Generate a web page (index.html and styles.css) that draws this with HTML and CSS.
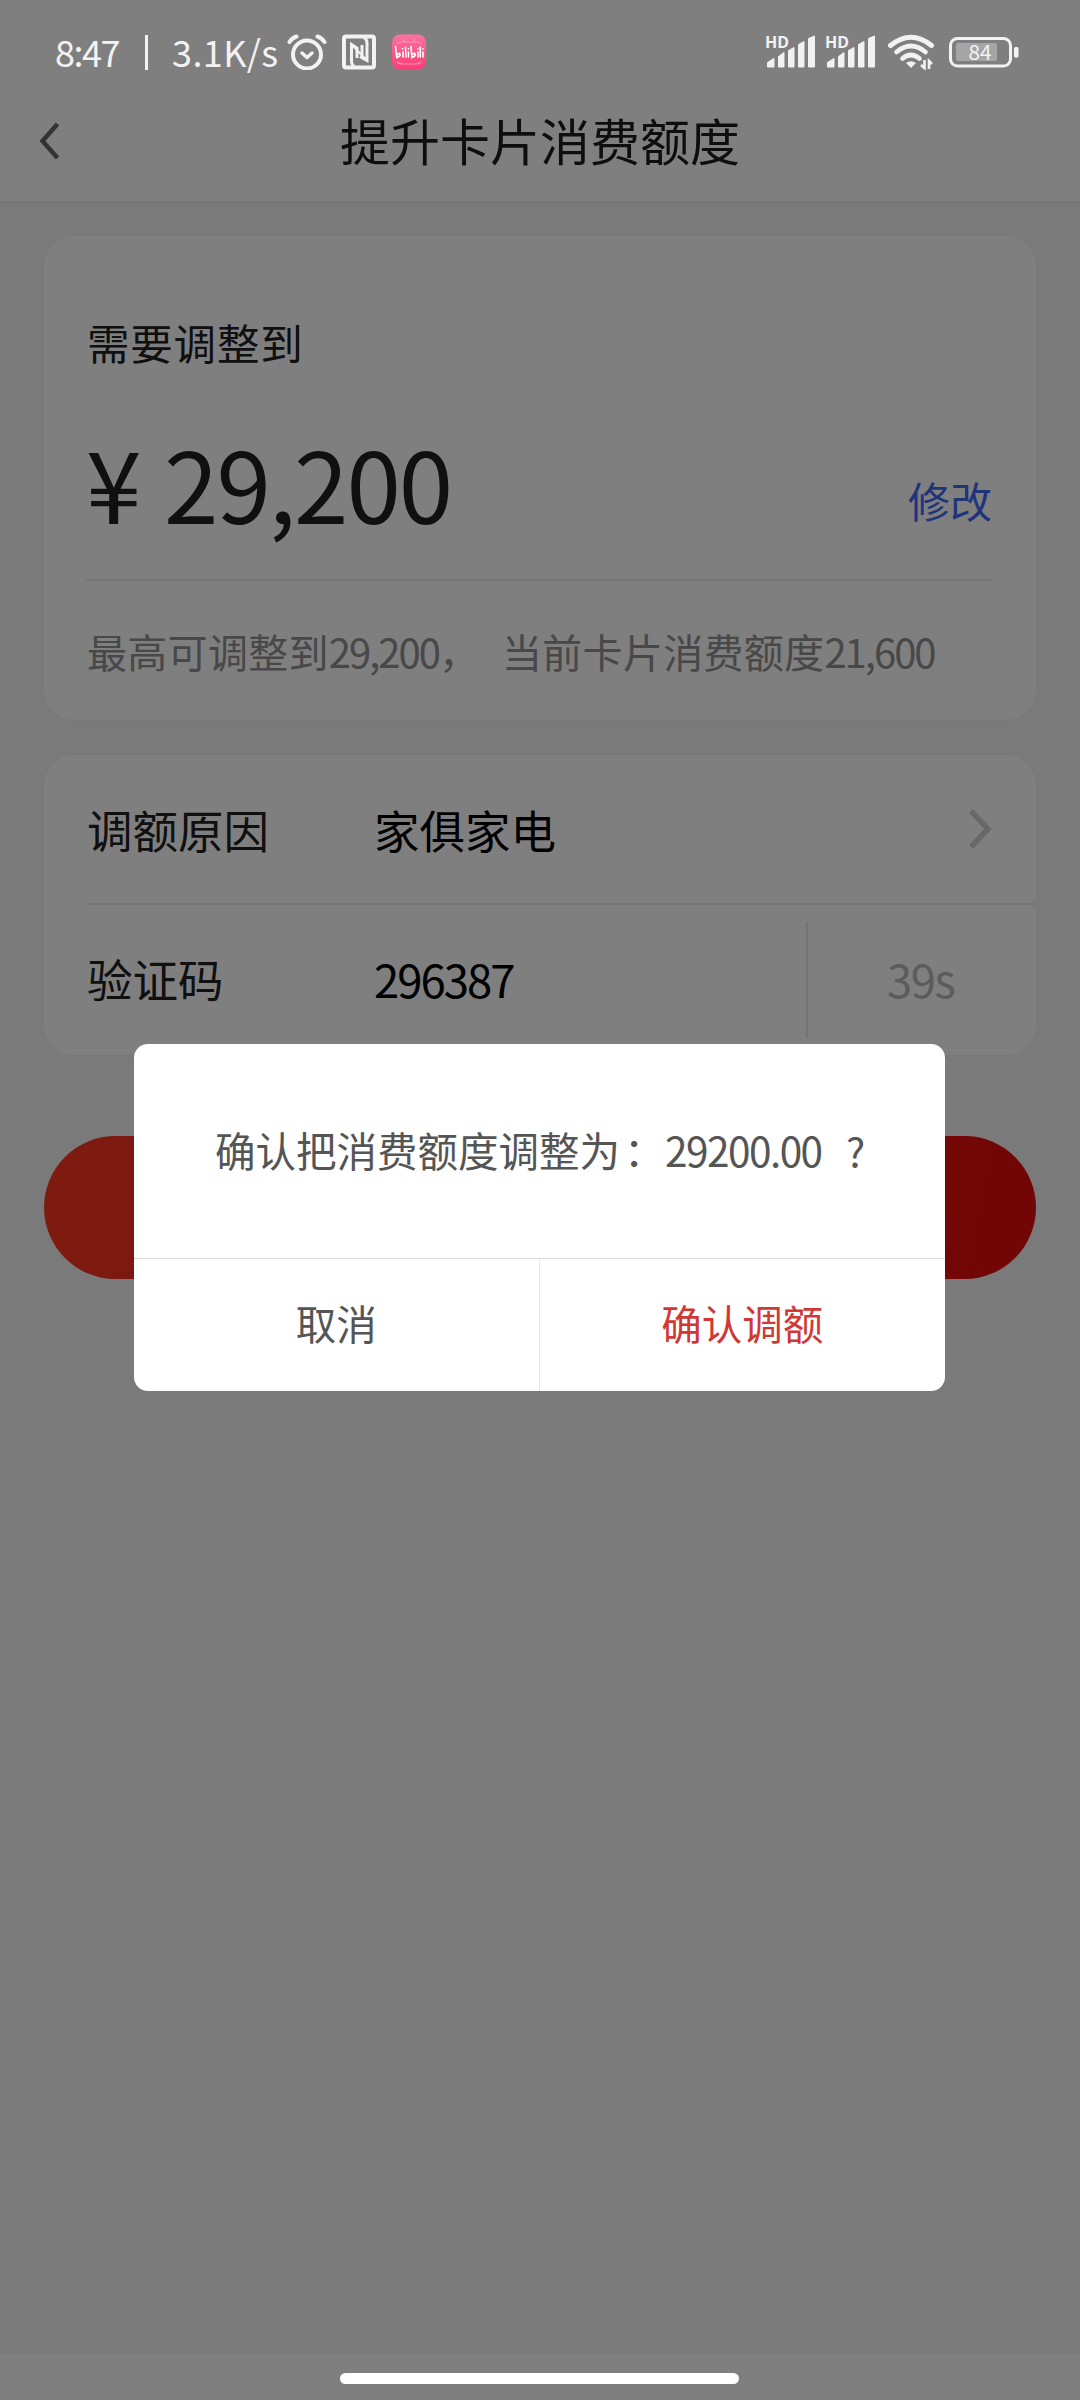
FILE: index.html
```html
<!DOCTYPE html>
<html lang="zh-CN">
<head>
<meta charset="utf-8">
<title>提升卡片消费额度</title>
<link rel="stylesheet" href="styles.css">
</head>
<body>
<div class="screen">
  <header class="header">
    <svg class="back" viewBox="0 0 22 40" width="22" height="40"><path d="M18.500 3L3.500 20L18.500 37" fill="none" stroke="#666" stroke-width="4.500"/></svg>
    <h1 class="title">提升卡片消费额度</h1>
  </header>
  <main class="content">
    <section class="card amount-card">
      <div class="label">需要调整到</div>
      <div class="amount-row">
        <div class="amount"><span class="yen">¥</span><span class="figure">29,200</span></div>
        <a class="edit">修改</a>
      </div>
      <div class="hint"><span>最高可调整到<span class="num">29,200</span>，</span><span>当前卡片消费额度<span class="num">21,600</span></span></div>
    </section>
    <section class="card form-card">
      <div class="row">
        <span class="name">调额原因</span>
        <span class="value">家俱家电</span>
        <svg class="chevron" viewBox="0 0 24 42" width="24" height="42"><path d="M3 3L20 21L3 39" fill="none" stroke="#d0d0d0" stroke-width="5.500"/></svg>
      </div>
      <div class="row row-code">
        <span class="name">验证码</span>
        <span class="value digits">296387</span>
        <span class="timer">39s</span>
      </div>
    </section>
    <div class="submit"></div>
  </main>
  <footer class="nav"></footer>
</div>
<div class="mask">
  <div class="status">
    <span class="clock">8:47</span>
    <span class="bar"></span>
    <span class="speed">3.1K/s</span>
    <svg class="alarm" viewBox="0 0 40 36" width="40" height="36" fill="none" stroke="#f2f2f2" stroke-linecap="round">
      <circle cx="20" cy="20.500" r="14" stroke-width="4"/>
      <path d="M2.500 8Q5 4 9.500 2.500M37.500 8Q35 4 30.500 2.500" stroke-width="4"/>
      <path d="M15 19L20 23.500L25 19" stroke-width="3.500" stroke-linejoin="round"/>
    </svg>
    <svg class="nfc" viewBox="0 0 34 36" width="34" height="36" fill="none" stroke="#f2f2f2">
      <rect x="2" y="2.500" width="30" height="31" rx="2" stroke-width="4"/>
      <path d="M12.500 33Q9.500 31 9.500 26V10.500L15 14V24M21.500 3Q25 5 25 9V26.500L18 22.500M20 11V22.500" stroke-width="3"/>
      <path d="M9.500 10.500L25 26.500" stroke-width="2"/>
    </svg>
    <svg class="bili" viewBox="0 0 36 36" width="36" height="36">
      <defs><linearGradient id="pink" x1="0" y1="0" x2="0" y2="1"><stop offset="0" stop-color="#f873a0"/><stop offset="1" stop-color="#fb3d76"/></linearGradient></defs>
      <rect x="1" y="0.500" width="34" height="35" rx="8" fill="url(#pink)"/>
      <path d="M6 10Q7 8 10 8H26Q29 8 30 10M6 28Q8 30 12 30H24Q28 30 30 28M12 5L14 8M24 5L22 8" fill="none" stroke="#ff8fb2" stroke-width="1.200"/>
      <g fill="none" stroke="#fff" stroke-width="1.600" stroke-linecap="round"><path d="M4.500 12.500L5.800 23.500Q10.800 21.500 8.500 19.300L6 20.500M12 18V23M11.600 14.800V15M14.500 13L15 23M17.500 18V23M17.500 14.800V15M20 12.500L21 23.500Q26 21.500 23.700 19.300L21 20.500M27 18V23M27 14.800V15M29.300 13V23M32 18V23M32 14.800V15"/></g>
    </svg>
    <span class="spacer"></span>
    <svg class="signal" viewBox="-2 -8 54 52" width="54" height="52" fill="#f2f2f2">
      <text x="0" y="13.500" class="hd" textLength="24" lengthAdjust="spacingAndGlyphs">HD</text>
      <path d="M2.500 33V28.500L9 24.500V33ZM13.500 33V22.500L19 18.500V33ZM23.500 33V16.500L29 13.500V33ZM33.500 33V10.500L39 7.500V33ZM43.500 33V4.500L49.500 2V33Z" stroke="#f2f2f2" stroke-width="1" stroke-linejoin="round"/>
    </svg>
    <svg class="signal" viewBox="-2 -8 54 52" width="54" height="52" fill="#f2f2f2">
      <text x="0" y="13.500" class="hd" textLength="24" lengthAdjust="spacingAndGlyphs">HD</text>
      <path d="M2.500 33V28.500L9 24.500V33ZM13.500 33V22.500L19 18.500V33ZM23.500 33V16.500L29 13.500V33ZM33.500 33V10.500L39 7.500V33ZM43.500 33V4.500L49.500 2V33Z" stroke="#f2f2f2" stroke-width="1" stroke-linejoin="round"/>
    </svg>
    <svg class="wifi" viewBox="0 0 46 36" width="46" height="36" fill="none" stroke="#f2f2f2" stroke-width="5" stroke-linecap="round">
      <path d="M2.500 11.500Q23 -5 43.500 11.500" /><path d="M8.500 18Q23 6 37.500 18M14.500 24.500Q23 17.500 31.500 24.500" stroke-width="4.600"/>
      <path d="M18 29Q23 25.500 28 29L23 34Z" fill="#f2f2f2" stroke="none"/>
      <path d="M36.500 26V34L33 31M41 35V27L44 30" stroke-width="2.600" stroke-linecap="butt"/>
    </svg>
    <svg class="battery" viewBox="0 -5 70 41" width="70" height="41">
      <rect x="1.500" y="1.500" width="60" height="27.500" rx="7" fill="none" stroke="#f2f2f2" stroke-width="3"/>
      <rect x="7" y="6" width="41" height="18" rx="2" fill="#a5a5a5"/>
      <rect x="65" y="10" width="4.500" height="10.500" rx="1.500" fill="#f2f2f2"/>
      <text x="19.500" y="22.500" class="level" textLength="23" lengthAdjust="spacingAndGlyphs">84</text>
    </svg>
  </div>
  <div class="dialog">
    <div class="message">确认把消费额度调整为<span class="colon">：</span><span class="num total">29200.00</span><span class="question">?</span></div>
    <div class="actions"><div class="cancel">取消</div><div class="confirm">确认调额</div></div>
  </div>
  <div class="home"></div>
</div>
</body>
</html>
```
FILE: styles.css
```css
* { box-sizing: border-box; }
body {
  margin: 0;
  width: 1080px;
  height: 2400px;
  position: relative;
  overflow: hidden;
  font-family: "Noto Sans CJK SC", "Noto Sans", sans-serif;
  font-weight: 400;
  white-space: nowrap;
}
.screen {
  display: flex;
  flex-direction: column;
  height: 2400px;
  background: #f5f5f5;
}
.header {
  display: grid;
  grid-template-columns: 70px 1fr 70px;
  align-items: center;
  height: 201px;
  padding-top: 80px;
  background: #fff;
  box-shadow: 0 2px 10px rgba(0, 0, 0, .06);
}
.back { margin-left: 39px; }
.title {
  margin: 0;
  font-size: 50px;
  line-height: 60px;
  padding-bottom: 4px;
  font-weight: 400;
  text-align: center;
  color: #1c1c1c;
}
.content { flex: 1; padding: 35px 44px 0; }
.card { background: #fff; border-radius: 30px; box-shadow: 0 0 4px rgba(0, 0, 0, .03); }
.amount-card { height: 484px; padding: 76px 44px 0 42px; }
.label { font-size: 42.500px; line-height: 60px; color: #202020; letter-spacing: .8px; padding-left: 1px; }
.amount-row {
  display: flex;
  justify-content: space-between;
  height: 209px;
  border-bottom: 2px solid #ebebeb;
}
.amount { display: flex; color: #202020; font-weight: 400; padding-top: 44px; line-height: 130px; }
.yen { width: 78px; font-size: 100px; letter-spacing: -6px; }
.figure { font-size: 98px; letter-spacing: -2px; }
.edit { font-size: 42px; line-height: 60px; margin-top: 98px; color: #4169f5; }
.hint {
  display: flex;
  font-size: 40px;
  letter-spacing: .3px;
  line-height: 60px;
  margin-top: 40px;
  padding-left: 1px;
  color: #909090;
}
.hint > span:first-child { width: 415px; }
.num { letter-spacing: -2px; }
.form-card { height: 300px; margin-top: 35px; padding-left: 42px; }
.row {
  display: grid;
  grid-template-columns: 288px 1fr 68px;
  align-items: center;
  height: 150px;
  border-bottom: 2px solid #ebebeb;
  font-size: 45.500px;
  line-height: 60px;
  color: #202020;
}
.row span { padding-bottom: 0; }
.name { padding-left: 1px; }
.value { color: #000; }
.row-code { grid-template-columns: 288px 1fr 230px; border: 0; }
.row-code span { padding-bottom: 4px; }
.digits { letter-spacing: -2px; }
.row .timer {
  align-self: center;
  height: 116px;
  line-height: 112px;
  padding: 0 0 0 79px;
  border-left: 2px solid #ebebeb;
  color: #b8b8b8;
  letter-spacing: -1.500px;
}
.submit {
  height: 143px;
  margin-top: 81px;
  border-radius: 72px;
  background: linear-gradient(100deg, #fc3822, #e40a0a);
}
.nav { height: 46px; background: #fff; }

/* dimmed layer with the dialog and the system bars */
.mask { position: absolute; inset: 0; background: rgba(0, 0, 0, .5); }
.status {
  display: flex;
  align-items: center;
  height: 36px;
  margin-top: 34px;
  padding: 0 61px 0 55px;
  color: #f2f2f2;
  font-size: 36px;
  line-height: 36px;
}
.clock { width: 90px; letter-spacing: -1.500px; padding-bottom: 2px; }
.bar { width: 3px; height: 35px; background: #f2f2f2; }
.speed { width: 139px; padding: 0 0 2px 24px; letter-spacing: .4px; }
.nfc { margin-left: 15px; }
.bili { margin-left: 15px; }
.spacer { flex: 1; }
.signal { margin-right: 6px; }
.hd { font: 700 16px "Noto Sans", sans-serif; }
.wifi { margin: 0 15px 0 5px; }
.level { font: 400 20px "Noto Sans CJK SC", sans-serif; fill: #f2f2f2; }
.dialog {
  width: 811px;
  height: 347px;
  margin: 974px 0 0 134px;
  display: grid;
  grid-template-rows: 215px 132px;
  border-radius: 14px;
  background: #fff;
  color: #555;
  font-size: 40.500px;
  line-height: 60px;
}
.message {
  display: flex;
  align-items: center;
  padding: 0 0 3px 81px;
  border-bottom: 1px solid #dcdcdc;
}
.colon { width: 40px; text-indent: 4px; }
.total { width: 181px; margin-left: 5px; letter-spacing: -1.500px; }
.actions { display: grid; grid-template-columns: 1fr 1fr; text-align: center; line-height: 128px; }
.cancel { border-right: 1px solid #e6e6e6; }
.confirm { color: #d03836; }
.home {
  width: 399px;
  height: 11px;
  margin: 982px 0 0 340px;
  border-radius: 6px;
  background: #fff;
}
```
